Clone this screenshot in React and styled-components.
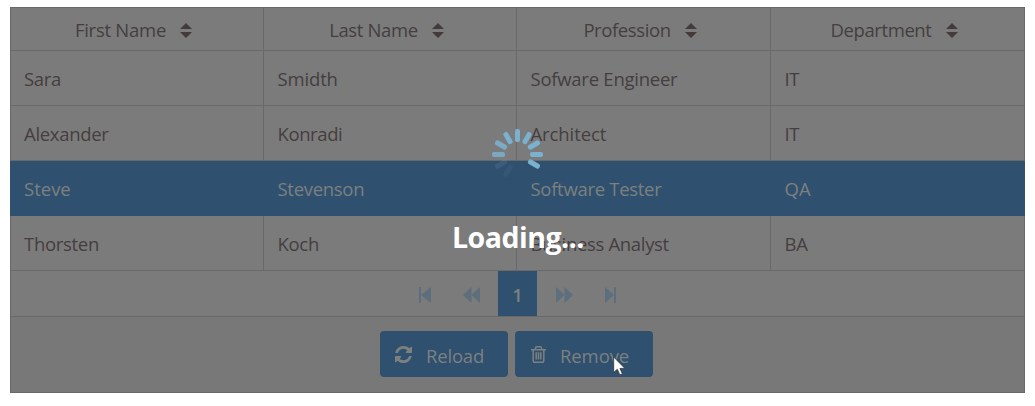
import React from "react";
import styled, { createGlobalStyle, css } from "styled-components";

const Global = createGlobalStyle`
  * { box-sizing: border-box; }
  body { margin: 0; background: #fff; font-family: "Open Sans", "Noto Sans", sans-serif; font-size: 18.5px; color: #453e40; }
`;
const line = "1px solid #696969";

const Page = styled.main`
  width: 1035px;
  height: 406px;
  padding: 7px 10px 0;
  overflow: hidden;
`;
const Table = styled.section`
  position: relative;
  width: 1015px;
  height: 386px;
  display: flex;
  flex-direction: column;
  background: #7b7b7b;
  box-shadow: inset 0 0 0 1px #696969;
`;
const columns = css`
  display: grid;
  grid-template-columns: 254px 253px 254px 254px;
`;
const HeaderRow = styled.div`
  ${columns}
  height: 44px;
  border-bottom: ${line};
`;
const HeaderCell = styled.div`
  display: flex;
  align-items: center;
  justify-content: center;
  gap: 14px;
  padding: 3px 6px 0 0;
  border-right: ${line};
  svg { flex: none; }
  & + & { padding-right: 7px; }
`;
const Row = styled.div`
  ${columns}
  height: 55px;
  border-bottom: ${(p) => (p.$selected ? "1px solid #2f506e" : line)};
  background: ${(p) => (p.$selected ? "#2f506e" : "transparent")};
  color: ${(p) => (p.$selected ? "#7c8081" : "inherit")};
`;
const Cell = styled.div`
  display: flex;
  align-items: center;
  padding: 2px 0 0 14px;
  border-right: ${(p) => (p.$selected ? "1px solid #2f506e" : line)};
  & + & { padding-left: 13.5px; }
`;
const Label = styled.span`
  white-space: nowrap;
  line-height: 26px;
  letter-spacing: ${(p) => p.$track ?? -0.3}px;
`;
const Pager = styled.nav`
  height: 46px;
  display: flex;
  justify-content: center;
  border-bottom: ${line};
`;
const PageButton = styled.span`
  width: ${(p) => p.$w}px;
  display: flex;
  align-items: center;
  justify-content: center;
  padding-top: 3px;
  padding-right: ${(p) => p.$shift || 0}px;
  background: ${(p) => (p.$active ? "#2f506e" : "transparent")};
  color: ${(p) => (p.$active ? "#7c8081" : "#5d6e7c")};
  font-weight: 600;
`;
const Footer = styled.footer`
  flex: 1;
  display: flex;
  gap: 7px;
  padding: 14px 0 0 369px;
  margin: 0 1px 1px;
  background: #787878;
`;
const Button = styled.button`
  width: ${(p) => p.$w}px;
  height: 46px;
  display: flex;
  align-items: center;
  gap: 14px;
  padding: 0 0 0 ${(p) => p.$pad}px;
  border: 0;
  border-radius: 4px;
  background: #2f506e;
  color: #7c8081;
  font: inherit;
  svg { flex: none; }
  span { padding-top: 4px; }
`;
const Spinner = styled.svg`
  position: absolute;
  left: 480px;
  top: 120px;
`;
const Loading = styled.strong`
  position: absolute;
  left: 442px;
  top: 210px;
  line-height: 40px;
  font-size: 28.5px;
  font-weight: 700;
  letter-spacing: -0.5px;
  color: #fff;
`;
const Pointer = styled.svg`
  position: absolute;
  left: 603px;
  top: 349px;
`;

const SortIcon = () => (
  <svg width="12" height="15" viewBox="0 0 12 15" fill="#453a3a">
    <path d="M6 0L12 6H0zM6 15L0 9h12z" />
  </svg>
);
const PageArrow = ({ d, w }) => (
  <svg width={w} height="16" viewBox={`0 0 ${w} 16`} fill="currentColor"><path d={d} /></svg>
);
const ReloadIcon = () => (
  <svg width="17" height="17" viewBox="0 0 1536 1536" fill="currentColor">
    <path d="M1511 928q0 5-1 7-64 268-268 434.500T764 1536q-146 0-282.500-55T238 1324l-129 129q-19 19-45 19t-45-19-19-45V960q0-26 19-45t45-19h448q26 0 45 19t19 45-19 45l-137 137q71 66 161 102t187 36q134 0 250-65t186-179q11-17 53-117 8-23 30-23h192q13 0 22.500 9.500t9.500 22.500zm25-800v448q0 26-19 45t-45 19h-448q-26 0-45-19t-19-45 19-45l138-138Q969 256 768 256q-134 0-250 65T332 500q-11 17-53 117-8 23-30 23H50q-13 0-22.500-9.500T18 608v-7q65-268 270-434.500T768 0q146 0 284 55.500T1297 212l130-129q19-19 45-19t45 19 19 45z" />
  </svg>
);
const TrashIcon = () => (
  <svg width="15" height="17" viewBox="0 0 15 17" fill="none" stroke="currentColor" strokeWidth="1.5">
    <path d="M0 3.700h15M4.500 3.200V1.900Q4.500 .8 5.600 .8h3.800q1.100 0 1.100 1.100v1.300M2.200 4v10.400q0 1.800 1.800 1.800h7q1.800 0 1.800-1.800V4M5.200 6.300v7.200M7.500 6.300v7.200M9.800 6.300v7.200" />
  </svg>
);

const headers = [["First Name", -0.25], ["Last Name", -0.35], ["Profession", -0.4], ["Department", -0.4]];
const rows = [
  [["Sara"], ["Smidth", -0.15], ["Sofware Engineer", -0.25], ["IT"]],
  [["Alexander"], ["Konradi", -0.4], ["Architect", -0.1], ["IT"]],
  [["Steve", 0], ["Stevenson"], ["Software Tester"], ["QA", 0]],
  [["Thorsten"], ["Koch"], ["Business Analyst", -0.33], ["BA"]],
];
const spokes = [
  [-150, 0.08], [-120, 0.14], [-90, 0.85], [-60, 0.9], [-30, 1],
  [0, 1], [30, 1], [60, 1], [90, 1], [120, 1],
];

export default function App() {
  return (
    <Page>
      <Global />
      <Table>
        <HeaderRow>
          {headers.map(([h, t]) => (
            <HeaderCell key={h}><Label $track={t}>{h}</Label><SortIcon /></HeaderCell>
          ))}
        </HeaderRow>
        {rows.map((r, i) => (
          <Row key={i} $selected={i === 2}>
            {r.map(([c, t], j) => (
              <Cell key={j} $selected={i === 2}><Label $track={t}>{c}</Label></Cell>
            ))}
          </Row>
        ))}
        <Pager>
          <PageButton $w={47} $shift={6}><PageArrow w={12} d="M0 0h2v16H0zM12 0v16L2 8z" /></PageButton>
          <PageButton $w={47} $shift={6}><PageArrow w={17} d="M8.500 0v16L0 8zM17 0v16L8.500 8z" /></PageButton>
          <PageButton $w={39} $active><Label>1</Label></PageButton>
          <PageButton $w={54}><PageArrow w={17} d="M0 0v16l8.500-8zM8.500 0v16L17 8z" /></PageButton>
          <PageButton $w={40} $shift={1}><PageArrow w={11} d="M0 0v16l9-8zM9 0h2v16H9z" /></PageButton>
        </Pager>
        <Footer>
          <Button $w={128} $pad={15}><ReloadIcon /><Label $track={-0.2}>Reload</Label></Button>
          <Button $w={138} $pad={16}><TrashIcon /><Label $track={-0.1}>Remove</Label></Button>
        </Footer>
        <Spinner width="56" height="56" viewBox="-27.5 -27.5 56 56">
          {spokes.map(([a, o]) => (
            <rect key={a} x="-2.5" y="-25.5" width="5" height="13" rx="2" fill="#7bb0ce" opacity={o} transform={`rotate(${a})`} />
          ))}
        </Spinner>
        <Loading>Loading...</Loading>
        <Pointer width="13" height="20" viewBox="0 0 13 20">
          <path d="M.7 1v15.500l3.600-3.300 2.600 5.700 2.500-1.200-2.500-5.300h5z" fill="#fff" stroke="#333" strokeWidth=".8" />
        </Pointer>
      </Table>
    </Page>
  );
}
